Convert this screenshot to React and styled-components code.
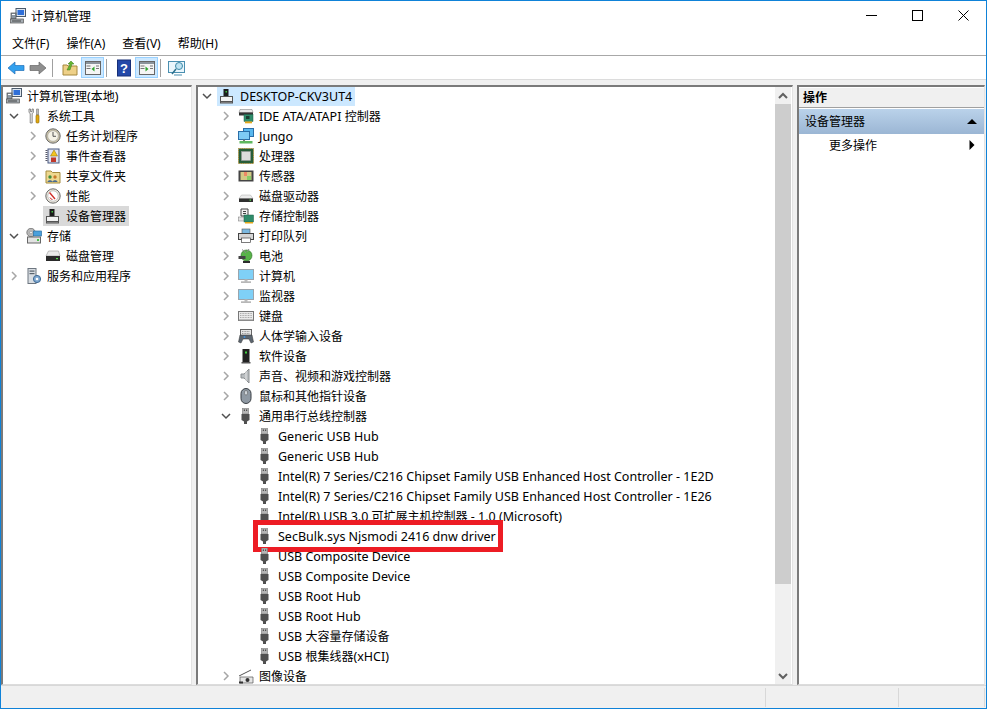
import React from "react";
import styled, { createGlobalStyle } from "styled-components";

const Global = createGlobalStyle`
  html, body { margin: 0; padding: 0; background: #fff; }
  body { font-family: "Noto Sans", "Noto Sans CJK SC", sans-serif; font-size: 12px; color: #000; }
  * { box-sizing: border-box; }
`;

const Window = styled.div`
  width: 987px; height: 709px; border: 1px solid #0f82d8; background: #f0f0f0;
  display: flex; flex-direction: column; overflow: hidden;
`;
const TitleBar = styled.div`
  height: 29px; background: #fff; display: flex; align-items: center; padding-left: 9px;
  flex: none; position: relative;
`;
const TitleText = styled.span`
  margin-left: 5px; font-size: 12px;
`;
const WindowControls = styled.div`
  margin-left: auto; display: flex; height: 100%; align-items: center;
`;
const WindowControl = styled.div`
  width: 46px; height: 29px; display: flex; align-items: center; justify-content: center;
`;
const MenuBar = styled.div`
  height: 26px; background: #fff; display: flex; align-items: center; padding-left: 11px; gap: 17px;
  border-bottom: 1px solid #a8a8a8; flex: none;
`;
const MenuItem = styled.span`
  font-size: 12px;
`;
const Toolbar = styled.div`
  height: 23px; background: #fff; display: flex; align-items: center; padding-left: 5px;
  flex: none;
`;
const ToolButton = styled.div`
  width: ${p => p.$w || 22}px; height: 21px; display: flex; align-items: center; justify-content: center;
  border: 1px solid ${p => (p.$active ? "#99d1ff" : "transparent")};
  background: ${p => (p.$active ? "#cce8ff" : "transparent")};
`;
const ToolSep = styled.div`
  width: 1px; height: 18px; background: #a0a0a0; margin: 0 ${p => p.$r}px 0 ${p => p.$l}px;
`;
const ToolRule = styled.div`
  height: 1px; background: #dcdcdc; flex: none;
`;
const Panes = styled.div`
  flex: 1; min-height: 0; display: flex; gap: 4px; padding: 5px 0 0 0; background: #f0f0f0;
`;
const Pane = styled.div`
  width: ${p => p.$w}px; flex: none; background: #fff; position: relative; display: flex; overflow: hidden;
  border-top: 2px solid #7a7a7a; border-left: 2px solid #7a7a7a;
  border-right: 1px solid #e3e3e3; border-bottom: 1px solid #dcdcdc;
`;
const Tree = styled.div`
  flex: 1; min-width: 0; overflow: hidden; position: relative; margin-top: -1px;
`;
const Row = styled.div`
  height: 20px; display: flex; align-items: center; padding-left: ${p => p.$indent}px; white-space: nowrap;
  position: relative;
`;
const Slot = styled.span`
  width: 16px; height: 20px; flex: none; display: flex; align-items: center; justify-content: center;
  margin-right: 2px;
`;
const Label = styled.span`
  height: 20px; display: flex; align-items: center; gap: 5px; padding: 0 3px 0 2px;
  background: ${p => (p.$sel === "gray" ? "#d9d9d9" : p.$sel === "blue" ? "#cce8ff" : "transparent")};
`;
const LabelText = styled.span`
  white-space: pre;
`;
const Latin = styled.span`
  font-size: 12.5px;
`;
const RedBox = styled.div`
  position: absolute; left: 55px; top: -6px; width: 250px; height: 32px; border: 5px solid #ed1c24;
  pointer-events: none;
`;
const Scrollbar = styled.div`
  width: 16px; flex: none; background: #f0f0f0; display: flex; flex-direction: column; margin-right: 1px;
`;
const ScrollArrow = styled.div`
  height: 17px; display: flex; align-items: center; justify-content: center; flex: none;
`;
const ScrollTrack = styled.div`
  flex: 1; min-height: 0;
`;
const ScrollThumb = styled.div`
  height: 480px; background: #cdcdcd;
`;
const ActionsCol = styled.div`
  flex: 1; display: flex; flex-direction: column; min-width: 0;
`;
const ActionsHead = styled.div`
  height: 20px; background: #f0f0f0; border-bottom: 1px solid #a0a0a0; font-weight: 700; padding: 0 0 1px 4px;
  display: flex; align-items: center; flex: none; margin-top: 1px;
`;
const ActionSection = styled.div`
  height: 25px; margin-top: 1px; background: linear-gradient(#bad2ea, #9bb6d4); display: flex; align-items: center;
  padding: 0 7px 2px 6px; justify-content: space-between; flex: none;
`;
const ActionItem = styled.div`
  height: 23px; display: flex; align-items: center; justify-content: space-between; padding: 0 9px 2px 30px; flex: none;
`;
const StatusBar = styled.div`
  height: 23px; flex: none; background: #f0f0f0; border-top: 1px solid #d8d8d8; display: flex; padding: 2px 1px 0 0;
`;
const StatusCell = styled.div`
  height: 19px; width: ${p => p.$w}px; flex: ${p => (p.$grow ? 1 : "none")}; border-right: 1px solid #d8d8d8;
`;

const Chev = ({ open }) => (
  <svg width="10" height="10" viewBox="0 0 10 10">
    {open ? (
      <path d="M1 3l4 4 4-4" fill="none" stroke="#505050" strokeWidth="1.5" />
    ) : (
      <path d="M3 1l4 4-4 4" fill="none" stroke="#a6a6a6" strokeWidth="1.5" />
    )}
  </svg>
);

const S = ({ children }) => (
  <svg width="16" height="16" viewBox="0 0 16 16" style={{ flex: "none" }}>{children}</svg>
);

const icons = {
  mgmt: (
    <S>
      <rect x="6" y="0.5" width="9.5" height="8" fill="#dfe6ee" stroke="#4b5a6b" />
      <rect x="7.5" y="2" width="6.5" height="5" fill="#2f6fd8" />
      <rect x="1" y="5" width="5" height="6" fill="#8d98a3" stroke="#4c4c4c" strokeWidth=".7" />
      <rect x="2" y="6" width="3" height="1" fill="#fff" />
      <rect x="0.5" y="11" width="13" height="4" fill="#a5acb2" stroke="#555" strokeWidth=".7" />
      <rect x="2" y="12.5" width="9" height="1" fill="#444" />
    </S>
  ),
  tools: (
    <S>
      <path d="M3 1v3.5l1.2 1V15h2V5.5L7.4 4.5V1L6 1v2.5H4.5V1z" fill="#e8e8e8" stroke="#666" strokeWidth=".7" />
      <path d="M10.5 1h2v6h-2z" fill="#bcbcbc" stroke="#777" strokeWidth=".6" />
      <rect x="10" y="7" width="3" height="8" rx="1" fill="#e2a80f" stroke="#8a6400" strokeWidth=".6" />
    </S>
  ),
  clock: (
    <S>
      <circle cx="8" cy="8" r="7.2" fill="#c9c1a6" stroke="#6c6c6c" />
      <circle cx="8" cy="8" r="5.3" fill="#f5f2e6" stroke="#999" strokeWidth=".5" />
      <path d="M8 4v4.3h3" fill="none" stroke="#555" />
    </S>
  ),
  event: (
    <S>
      <rect x="3" y="1" width="11" height="14" fill="#dfe3f0" stroke="#4a5a80" />
      <path d="M1.5 2v12" stroke="#556" strokeWidth="2" strokeDasharray="1 1" />
      <path d="M9 2l3.5 6h-7z" fill="#f3c420" stroke="#8a6d00" strokeWidth=".5" />
      <rect x="6" y="9.5" width="5" height="4.5" fill="#c0392b" />
    </S>
  ),
  share: (
    <S>
      <path d="M1 3h5l1.5 1.5H15V15H1z" fill="#eed88f" stroke="#a58c3e" />
      <circle cx="5" cy="9" r="1.7" fill="#3f8f3f" />
      <circle cx="10" cy="9" r="1.7" fill="#c77b2a" />
      <path d="M2.5 14c0-2.500 5-2.500 5 0zM7.500 14c0-2.500 5-2.500 5 0z" fill="#4a6b8f" />
    </S>
  ),
  perf: (
    <S>
      <circle cx="8" cy="8" r="7.2" fill="#e9e5da" stroke="#6c6c6c" />
      <circle cx="8" cy="8" r="5.2" fill="#fff" stroke="#aaa" strokeWidth=".6" />
      <path d="M4.500 4.500L10 11" stroke="#d0302a" strokeWidth="1.4" />
      <path d="M5 9.500a3 3 0 0 0 2.500 2" stroke="#d0302a" fill="none" />
    </S>
  ),
  pc: (
    <S>
      <rect x="4.500" y="1" width="5" height="7.500" fill="#1c1c1c" />
      <rect x="6.500" y="3" width="1.500" height="1.500" fill="#3ec43e" />
      <rect x="1.500" y="8.500" width="12" height="6.500" fill="#f2f2f2" stroke="#555" />
      <rect x="2" y="13" width="11" height="1.500" fill="#555" />
    </S>
  ),
  storage: (
    <S>
      <circle cx="5" cy="4.500" r="4.200" fill="#b8b8b8" stroke="#666" strokeWidth=".7" />
      <circle cx="5" cy="4.500" r="1.200" fill="#fff" stroke="#666" strokeWidth=".4" />
      <rect x="7.500" y="3" width="8" height="5" fill="#4aa0dc" stroke="#2b6ea0" strokeWidth=".7" />
      <rect x="1.500" y="9" width="13" height="6" fill="#e2e2e2" stroke="#666" />
      <rect x="11" y="11" width="2" height="2" fill="#4cc24c" />
    </S>
  ),
  disk: (
    <S>
      <path d="M3.500 3h10l1.500 5H1z" fill="#eaeaea" stroke="#999" strokeWidth=".6" />
      <rect x="1" y="8" width="14" height="5" fill="#2a2a2a" />
      <rect x="11" y="10" width="2" height="1.200" fill="#54e04e" />
    </S>
  ),
  service: (
    <S>
      <rect x="2" y="0.500" width="8" height="15" fill="#d8dde2" stroke="#6d7680" />
      <rect x="3.500" y="2.500" width="5" height="1.200" fill="#59636d" />
      <rect x="3.500" y="5" width="5" height="1.200" fill="#59636d" />
      <circle cx="11" cy="11" r="3.600" fill="#7fa8d0" stroke="#3e6a96" />
      <circle cx="11" cy="11" r="1.300" fill="#fff" />
    </S>
  ),
  ide: (
    <S>
      <path d="M2 1.500h12l1 3H1z" fill="#e7e7e7" stroke="#888" strokeWidth=".6" />
      <rect x="1" y="4.500" width="14" height="3" fill="#333" />
      <rect x="6" y="6.500" width="9" height="7" fill="#2e8c6a" stroke="#1d5f47" strokeWidth=".5" />
      <rect x="8" y="8" width="3.500" height="3" fill="#1a3d30" />
      <rect x="7" y="13.500" width="7" height="1.800" fill="#e5a81a" />
    </S>
  ),
  net: (
    <S>
      <rect x="5.500" y="0.500" width="10" height="8" fill="#58b7ee" stroke="#2a6ea8" />
      <rect x="0.500" y="3.500" width="11" height="8" fill="#7fcbf5" stroke="#2a6ea8" />
      <path d="M5 11.500h2V13H5z" fill="#777" />
      <rect x="1.500" y="13" width="13" height="2.500" fill="#5fb85f" />
    </S>
  ),
  cpu: (
    <S>
      <rect x="0.500" y="0.500" width="15" height="15" fill="#275d38" stroke="#b28d30" strokeDasharray="1 .8" />
      <rect x="3.500" y="3.500" width="9" height="9" fill="#dcdcdc" stroke="#999" strokeWidth=".6" />
    </S>
  ),
  sensor: (
    <S>
      <rect x="0.500" y="2.500" width="15" height="11" fill="#444" />
      <rect x="2.500" y="4" width="11" height="8" fill="#d3c985" />
      <rect x="6" y="4" width="3" height="4" fill="#e86" />
      <rect x="9" y="8" width="4" height="4" fill="#8c6" />
    </S>
  ),
  hdd: (
    <S>
      <path d="M3.500 7h9l2.500 3.500H1z" fill="#ececec" stroke="#a8a8a8" strokeWidth=".5" />
      <rect x="1" y="10.500" width="14" height="3.500" fill="#2f2f2f" />
      <rect x="11.500" y="11.500" width="1.500" height="1.200" fill="#54e04e" />
    </S>
  ),
  store: (
    <S>
      <path d="M3 1h7v7H3z" fill="#f2f2f2" stroke="#444" />
      <path d="M5 3.500h3M5 5.500h3" stroke="#444" />
      <rect x="0.500" y="9" width="6" height="4" fill="#e3e3e3" stroke="#777" strokeWidth=".5" />
      <rect x="6" y="7" width="9.500" height="7" fill="#2e8c6a" stroke="#1d5f47" strokeWidth=".5" />
      <rect x="7" y="14" width="8" height="1.500" fill="#e5a81a" />
    </S>
  ),
  printer: (
    <S>
      <rect x="4" y="1" width="8" height="5" fill="#7bb8e0" stroke="#555" strokeWidth=".6" />
      <rect x="0.500" y="5.500" width="15" height="6" fill="#d6d6d6" stroke="#444" />
      <rect x="3.500" y="10" width="9" height="4.500" fill="#fff" stroke="#444" strokeWidth=".7" />
    </S>
  ),
  battery: (
    <S>
      <ellipse cx="8.500" cy="7.500" rx="5.500" ry="5.500" fill="#58b348" stroke="#2c6a24" strokeWidth=".6" />
      <path d="M4 1.500l4 3.500M11 1l-2 3" stroke="#888" />
      <rect x="0.500" y="8" width="7" height="3" fill="#444" />
      <path d="M5 13h7v2H5z" fill="#2c2c2c" />
    </S>
  ),
  monitor: (
    <S>
      <rect x="0.500" y="1.500" width="15" height="10" fill="#7fd0f7" stroke="#9aa5ad" />
      <rect x="6.500" y="11.500" width="3" height="2" fill="#bbb" />
      <rect x="3" y="13.500" width="10" height="1.200" fill="#999" />
    </S>
  ),
  keyboard: (
    <S>
      <rect x="0.500" y="3.500" width="15" height="9" fill="#eaeaea" stroke="#777" />
      <path d="M2 5.500h12M2 7.500h12M2 9.500h12" stroke="#aaa" strokeDasharray="1 .6" />
      <rect x="0.500" y="11.500" width="15" height="1.500" fill="#8a8a8a" />
    </S>
  ),
  hid: (
    <S>
      <rect x="2.500" y="1.500" width="11" height="6" fill="#e6e6e6" stroke="#666" />
      <path d="M4 3.500h8M4 5.500h8" stroke="#999" strokeDasharray="1 .6" />
      <path d="M2 7h12l1.500 7-2.500 1-2-4H5l-2 4-2.500-1z" fill="#5c6670" stroke="#333" strokeWidth=".5" />
      <circle cx="6.500" cy="9" r="1" fill="#3f8fd8" />
    </S>
  ),
  soft: (
    <S>
      <rect x="4.500" y="1" width="7" height="13" fill="#222" />
      <rect x="7" y="3.500" width="2" height="2" fill="#3fd13f" />
      <rect x="3.500" y="14" width="9" height="1.500" fill="#555" />
    </S>
  ),
  sound: (
    <S>
      <path d="M3 6h3l5-5v14l-5-5H3z" fill="#b9bdc0" stroke="#8a8e91" />
      <path d="M8 3v10" stroke="#e6e6e6" />
    </S>
  ),
  mouse: (
    <S>
      <rect x="3" y="0.500" width="10" height="15" rx="5" fill="#8f99a3" stroke="#3a3f44" />
      <rect x="6.500" y="2.500" width="3" height="4.500" rx="1.500" fill="#cfd5da" stroke="#555" strokeWidth=".5" />
    </S>
  ),
  usb: (
    <S>
      <rect x="4.500" y="0" width="6" height="6" fill="#b5b5b5" stroke="#777" strokeWidth=".6" />
      <rect x="5.800" y="1.500" width="1.200" height="1.400" fill="#444" />
      <rect x="8" y="1.500" width="1.200" height="1.400" fill="#444" />
      <path d="M3.500 6h8v6L9 13.500V16H6v-2.500L3.500 12z" fill="#505050" />
    </S>
  ),
  camera: (
    <S>
      <path d="M1 8L13 2" stroke="#555" />
      <path d="M2 9h13v6H2z" fill="#e5e5e5" stroke="#555" strokeWidth=".7" />
      <circle cx="9.500" cy="12" r="2" fill="#333" />
      <rect x="1" y="13.500" width="4" height="2" fill="#333" />
    </S>
  ),
};

const T = ({ children }) => <svg width="18" height="18" viewBox="0 0 18 18" style={{ flex: "none" }}>{children}</svg>;

const runs = text =>
  text.split(/([\u0000-\u00ff]+)/).filter(Boolean).map((part, i) =>
    /^[\u0000-\u00ff]/.test(part) ? <Latin key={i}>{part}</Latin> : <span key={i}>{part}</span>
  );

const TreeNode = ({ indent, chev, icon, text, sel, children }) => (
  <Row $indent={indent}>
    {chev !== null && <Slot>{chev ? <Chev open={chev === "open"} /> : null}</Slot>}
    <Label $sel={sel}>{icons[icon]}<LabelText>{runs(text)}</LabelText></Label>
    {children}
  </Row>
);

const center = [
  ["IDE ATA/ATAPI 控制器", "ide"], ["Jungo", "net"], ["处理器", "cpu"], ["传感器", "sensor"], ["磁盘驱动器", "hdd"],
  ["存储控制器", "store"], ["打印队列", "printer"], ["电池", "battery"], ["计算机", "monitor"], ["监视器", "monitor"],
  ["键盘", "keyboard"], ["人体学输入设备", "hid"], ["软件设备", "soft"], ["声音、视频和游戏控制器", "sound"], ["鼠标和其他指针设备", "mouse"],
];
const usb = [
  "Generic USB Hub", "Generic USB Hub",
  "Intel(R) 7 Series/C216 Chipset Family USB Enhanced Host Controller - 1E2D",
  "Intel(R) 7 Series/C216 Chipset Family USB Enhanced Host Controller - 1E26",
  "Intel(R) USB 3.0 可扩展主机控制器 - 1.0 (Microsoft)",
  "SecBulk.sys Njsmodi 2416 dnw driver",
  "USB Composite Device", "USB Composite Device", "USB Root Hub", "USB Root Hub", "USB 大容量存储设备", "USB 根集线器(xHCI)",
];

export default function App() {
  return (
    <>
      <Global />
      <Window>
        <TitleBar>
          {icons.mgmt}
          <TitleText>计算机管理</TitleText>
          <WindowControls>
            <WindowControl>
              <svg width="11" height="11" viewBox="0 0 11 11"><path d="M0 5.500h11" stroke="#000" /></svg>
            </WindowControl>
            <WindowControl>
              <svg width="11" height="11" viewBox="0 0 11 11"><rect x=".5" y=".5" width="10" height="10" fill="none" stroke="#000" /></svg>
            </WindowControl>
            <WindowControl>
              <svg width="11" height="11" viewBox="0 0 11 11"><path d="M.5.500l10 10M10.500.500l-10 10" stroke="#000" /></svg>
            </WindowControl>
          </WindowControls>
        </TitleBar>
        <MenuBar>
          <MenuItem>文件(F)</MenuItem>
          <MenuItem>操作(A)</MenuItem>
          <MenuItem>查看(V)</MenuItem>
          <MenuItem>帮助(H)</MenuItem>
        </MenuBar>
        <Toolbar>
          <ToolButton $w={20}>
            <T><path d="M1 9l7-6v3.500h9v5H8V15z" fill="#32a0ee" stroke="#1f6fb8" strokeWidth=".7" /></T>
          </ToolButton>
          <ToolButton $w={24}>
            <T><path d="M17 9l-7-6v3.500H1v5h9V15z" fill="#8f8f8f" stroke="#666" strokeWidth=".7" /></T>
          </ToolButton>
          <ToolSep $l={2} $r={5} />
          <ToolButton $w={23}>
            <T>
              <path d="M2 6h4l1 1h9v9H2z" fill="#eed088" stroke="#a5883c" />
              <path d="M6 11l3-6-2 0 3-3 3 3h-2l-2 6z" fill="#65b530" stroke="#3d7a1a" strokeWidth=".5" />
            </T>
          </ToolButton>
          <ToolButton $active $w={23}>
            <T>
              <rect x="1.500" y="2.500" width="15" height="13" fill="#f5f5f5" stroke="#666" />
              <rect x="2" y="3" width="14" height="2" fill="#8a939b" />
              <rect x="2.500" y="6.500" width="4" height="1" fill="#777" /><rect x="2.500" y="9" width="4" height="1" fill="#777" />
              <rect x="12" y="6.500" width="3" height="1" fill="#777" /><rect x="12" y="9" width="3" height="1" fill="#777" />
              <path d="M10.500 7.500v5l-3-2.500z" fill="#2fa52f" />
            </T>
          </ToolButton>
          <ToolSep $l={2} $r={5} />
          <ToolButton $w={23}>
            <T>
              <rect x="2.500" y="1" width="13" height="16" fill="#2448a8" stroke="#162f78" />
              <text x="9" y="14" textAnchor="middle" fill="#fff" fontSize="13" fontWeight="700" fontFamily="Liberation Sans, sans-serif">?</text>
            </T>
          </ToolButton>
          <ToolButton $active $w={23}>
            <T>
              <rect x="1.500" y="2.500" width="15" height="13" fill="#f5f5f5" stroke="#666" />
              <rect x="2" y="3" width="14" height="2" fill="#8a939b" />
              <rect x="2.500" y="6.500" width="4" height="1" fill="#777" /><rect x="2.500" y="9" width="4" height="1" fill="#777" />
              <rect x="12" y="6.500" width="3" height="1" fill="#777" /><rect x="12" y="9" width="3" height="1" fill="#777" />
              <path d="M7.500 7.500v5l3-2.500z" fill="#2fa52f" />
            </T>
          </ToolButton>
          <ToolSep $l={2} $r={5} />
          <ToolButton $w={22}>
            <T>
              <rect x="0.500" y="2.500" width="16" height="11" fill="#eaf6fc" stroke="#4a8fb0" />
              <circle cx="11" cy="7" r="3.500" fill="#bfe3f2" stroke="#3d89a8" />
              <path d="M8 10l-4 5" stroke="#2a6f8c" strokeWidth="1.500" />
              <path d="M6 16h8" stroke="#4a8fb0" />
            </T>
          </ToolButton>
        </Toolbar>
        <ToolRule />
        <Panes>
          <Pane $w={191}>
            <Tree>
              <TreeNode indent={1} chev={null} icon="mgmt" text="计算机管理(本地)" />
              <TreeNode indent={3} chev="open" icon="tools" text="系统工具" />
              <TreeNode indent={22} chev="closed" icon="clock" text="任务计划程序" />
              <TreeNode indent={22} chev="closed" icon="event" text="事件查看器" />
              <TreeNode indent={22} chev="closed" icon="share" text="共享文件夹" />
              <TreeNode indent={22} chev="closed" icon="perf" text="性能" />
              <TreeNode indent={22} icon="pc" text="设备管理器" sel="gray" />
              <TreeNode indent={3} chev="open" icon="storage" text="存储" />
              <TreeNode indent={22} icon="disk" text="磁盘管理" />
              <TreeNode indent={3} chev="closed" icon="service" text="服务和应用程序" />
            </Tree>
          </Pane>
          <Pane $w={597}>
            <Tree>
              <TreeNode indent={1} chev="open" icon="pc" text="DESKTOP-CKV3UT4" sel="blue" />
              {center.map(([t, i]) => (
                <TreeNode key={t} indent={20} chev="closed" icon={i} text={t} />
              ))}
              <TreeNode indent={20} chev="open" icon="usb" text="通用串行总线控制器" />
              {usb.map((t, n) => (
                <TreeNode key={n} indent={39} icon="usb" text={t}>
                  {t.startsWith("SecBulk") && <RedBox />}
                </TreeNode>
              ))}
              <TreeNode indent={20} chev="closed" icon="camera" text="图像设备" />
            </Tree>
            <Scrollbar>
              <ScrollArrow>
                <svg width="10" height="8" viewBox="0 0 10 8"><path d="M1 6l4-4 4 4" fill="none" stroke="#606060" strokeWidth="2" /></svg>
              </ScrollArrow>
              <ScrollThumb />
              <ScrollTrack />
              <ScrollArrow>
                <svg width="10" height="8" viewBox="0 0 10 8"><path d="M1 2l4 4 4-4" fill="none" stroke="#606060" strokeWidth="2" /></svg>
              </ScrollArrow>
            </Scrollbar>
          </Pane>
          <Pane $w={188}>
            <ActionsCol>
              <ActionsHead>操作</ActionsHead>
              <ActionSection>
                设备管理器
                <svg width="10" height="6" viewBox="0 0 10 6"><path d="M0 6l5-5 5 5z" fill="#000" /></svg>
              </ActionSection>
              <ActionItem>
                更多操作
                <svg width="6" height="10" viewBox="0 0 6 10"><path d="M0.500 0l5 5-5 5z" fill="#000" /></svg>
              </ActionItem>
            </ActionsCol>
          </Pane>
        </Panes>
        <StatusBar>
          <StatusCell $grow />
          <StatusCell $w={133} />
          <StatusCell $w={86} />
        </StatusBar>
      </Window>
    </>
  );
}
